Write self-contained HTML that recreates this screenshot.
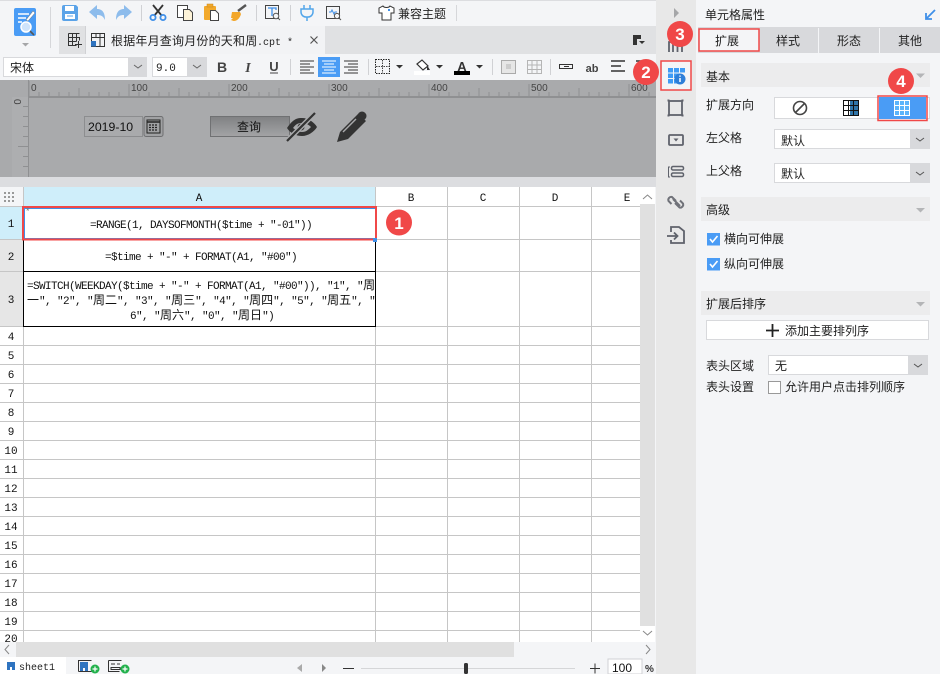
<!DOCTYPE html>
<html><head><meta charset="utf-8"><style>
html,body{margin:0;padding:0;background:#f4f5f7}
svg{display:block;position:absolute;left:0;top:0}
text{font-family:"Liberation Sans","WenQuanYi Zen Hei","Noto Sans CJK SC",sans-serif;font-size:12px;fill:#222}
.m{font-family:"Liberation Mono",monospace;font-size:11px;letter-spacing:-.6px;fill:#111}
.m tspan{font-family:"WenQuanYi Zen Hei","Noto Sans CJK SC",sans-serif;font-size:12px;letter-spacing:0}
.c{text-anchor:middle}
.h{font-family:"Liberation Mono",monospace;font-size:11px;fill:#111;text-anchor:middle}
.r{font-size:10px;fill:#444}
.n{font-family:"Liberation Mono",monospace;font-size:11px;fill:#111;text-anchor:middle}
.b{font-family:"Liberation Sans",sans-serif;font-size:17px;font-weight:bold;fill:#fff;text-anchor:middle}
.g line{stroke:#c6c6c6;stroke-width:1}
</style></head><body>
<svg width="940" height="674" viewBox="0 0 940 674" xmlns="http://www.w3.org/2000/svg">
<!-- base -->
<rect width="940" height="674" fill="#f4f5f7"/>
<rect width="940" height="1" fill="#dcdde0"/>
<!-- logo -->
<rect x="14" y="8" width="22" height="28" rx="2" fill="#4a9cf5"/>
<path d="M18 14h11M18 18h8M18 22h4" stroke="#fff" stroke-width="1.6"/>
<path d="M26 20l7-9 2 2-7 8z" fill="#fff" stroke="#777" stroke-width=".5"/>
<circle cx="26" cy="27" r="5" fill="#cfe4fb" stroke="#fff" stroke-width="1.5"/>
<path d="M30 31l4 4" stroke="#555" stroke-width="1.6"/>
<path d="M22 43h7l-3.5 3.5z" fill="#a5a6a8"/>
<rect x="50" y="7" width="1" height="41" fill="#d6d7da"/>
<!-- save -->
<path d="M62 7a2 2 0 0 1 2-2h12l2 2v12a2 2 0 0 1-2 2H64a2 2 0 0 1-2-2z" fill="#5ba3e8"/>
<path d="M65 6h9v5h-9zM65 14h10v5H65z" fill="#fff"/>
<path d="M67 16h6" stroke="#5ba3e8"/>
<!-- undo redo -->
<path d="M97 5v4c5 0 8 3 8 11-2-4-4-5-8-5v4l-8-7z" fill="#8dbcec"/>
<path d="M124 5v4c-5 0-8 3-8 11 2-4 4-5 8-5v4l8-7z" fill="#8dbcec"/>
<rect x="141" y="5" width="1" height="16" fill="#d0d1d4"/>
<!-- cut -->
<path d="M153 5l9 11M163 5l-9 11" stroke="#333" stroke-width="1.8"/>
<circle cx="153" cy="17.5" r="2.6" fill="none" stroke="#3f8fe8" stroke-width="1.8"/>
<circle cx="163" cy="17.5" r="2.6" fill="none" stroke="#3f8fe8" stroke-width="1.8"/>
<!-- copy -->
<rect x="177.500" y="5.500" width="10" height="12" fill="#fff" stroke="#444"/>
<path d="M183.500 9.500h6l3 3v8h-9z" fill="#fdf3d8" stroke="#444"/>
<!-- paste -->
<rect x="204" y="6" width="12" height="14" rx="1" fill="#f2a92c"/>
<rect x="207" y="4" width="6" height="3" fill="#f2a92c" stroke="#c5851a" stroke-width=".5"/>
<path d="M210.500 10.500h5l3 3v7h-8z" fill="#fff" stroke="#444"/>
<!-- brush -->
<path d="M238 11l8-6" stroke="#555" stroke-width="2.4"/>
<path d="M232 12l8 0 1 2c-1 4-4 7-7 7-1 0-3-1-3-1l2-2-2 0z" fill="#f3a72b"/>
<rect x="256" y="5" width="1" height="16" fill="#d0d1d4"/>
<!-- preview T -->
<rect x="265.500" y="5.500" width="13" height="13" fill="none" stroke="#444"/>
<path d="M268 8h8v2M272 8v8" fill="none" stroke="#3f8fe8" stroke-width="1.3"/>
<circle cx="276" cy="16" r="2.8" fill="#f4f5f7" stroke="#555"/><path d="M278 18l2 2" stroke="#555"/>
<rect x="290" y="5" width="1" height="16" fill="#d0d1d4"/>
<!-- plug -->
<path d="M304 5v4M310 5v4M301 9h12v3a5 5 0 0 1-5 5h-2a5 5 0 0 1-5-5zM307 17v4" fill="none" stroke="#53a6ea" stroke-width="1.5"/>
<!-- monitor -->
<rect x="326.500" y="6.500" width="13" height="12" fill="none" stroke="#444"/>
<path d="M329 12h2l1-2 2 4 1-2h2" fill="none" stroke="#3f8fe8"/>
<circle cx="337" cy="16" r="2.6" fill="#f4f5f7" stroke="#555"/><path d="M339 18l2 2" stroke="#555"/>
<!-- shirt -->
<path d="M383 6l-4 2v5h3v7h9v-7h3V8l-4-2c-1 2-6 2-7 0z" fill="#fff" stroke="#333"/>
<rect x="388" y="9" width="2" height="2" fill="#3f8fe8"/>
<text x="398" y="18">兼容主题</text>
<rect x="456" y="5" width="1" height="16" fill="#d6d7da"/>
<!-- tab row -->
<rect x="59" y="26" width="597" height="28" fill="#e0e1e3"/>
<path d="M68.500 33.500h11M68.500 33.500v12h8M72.500 33.500v12M76.500 33.500v8M68.500 37.500h11v3M68.500 41.500h8M78.500 41v7M75 44.500h7" fill="none" stroke="#333"/>
<rect x="86" y="26" width="239" height="28" fill="#f2f3f5"/>
<rect x="85" y="26" width="1" height="28" fill="#d0d1d4"/>
<path d="M91.500 33.500h13v13h-13zM91.500 37.500h13M96 33.500v4M100 33.500v13" fill="none" stroke="#333"/>
<path d="M91 41h5v5.500h-5z" fill="#2f74c0"/>
<text x="111" y="45" style="font-size:12px;letter-spacing:.2px">根据年月查询月份的天和周</text>
<text x="257" y="45" style="font-family:'Liberation Mono',monospace;font-size:10px">.cpt *</text>
<path d="M310.500 36.500l7 7M317.500 36.500l-7 7" stroke="#555" stroke-width="1.2"/>
<path d="M633 35h8v4h-4v6h-4z" fill="#333"/><path d="M639 41h6l-3 3z" fill="#333"/>
<!-- format toolbar -->
<rect x="3" y="57" width="144" height="20" fill="#d8d9dc"/>
<rect x="4" y="58" width="124" height="18" fill="#fff"/>
<text x="10" y="72" style="font-size:12px">宋体</text>
<path d="M134 65l4 3 4-3" fill="none" stroke="#666"/>
<rect x="152" y="57" width="55" height="20" fill="#d8d9dc"/>
<rect x="153" y="58" width="34" height="18" fill="#fff"/>
<text x="156" y="71" style="font-family:'Liberation Mono',monospace;font-size:11px">9.0</text>
<path d="M193 65l4 3 4-3" fill="none" stroke="#666"/>
<text x="222" y="72" class="c" style="font-size:14px;font-weight:bold;fill:#444">B</text>
<text x="248" y="72" class="c" style="font-size:14px;font-style:italic;font-weight:bold;fill:#444;font-family:'Liberation Serif',serif">I</text>
<text x="274" y="71" class="c" style="font-size:13px;font-weight:bold;fill:#444">U</text><path d="M270 73h8" stroke="#444"/>
<rect x="290" y="59" width="1" height="16" fill="#d0d1d4"/>
<path d="M300 61h14M300 64h10M300 67h14M300 70h10M300 73h14" stroke="#333"/>
<rect x="318" y="57" width="22" height="20" fill="#4a9cf5"/>
<path d="M322 61h14M324 64h10M322 67h14M324 70h10M322 73h14" stroke="#fff"/>
<path d="M344 61h14M348 64h10M344 67h14M348 70h10M344 73h14" stroke="#333"/>
<rect x="368" y="59" width="1" height="16" fill="#d0d1d4"/>
<rect x="375.500" y="59.500" width="14" height="14" fill="none" stroke="#222" stroke-dasharray="1.500 1"/>
<path d="M382.500 60v13M376 66.500h13" stroke="#444" stroke-dasharray="1.500 1"/>
<path d="M396 65h7l-3.500 3.500z" fill="#333"/>
<path d="M417 64l5-4 6 6-5 4z" fill="#fff" stroke="#333" stroke-width="1.200"/><path d="M427 65l3 5h-3z" fill="#333"/>
<rect x="414" y="71" width="16" height="4" fill="#fff"/>
<path d="M436 65h7l-3.500 3.500z" fill="#333"/>
<text x="462" y="71" class="c" style="font-size:13px;font-weight:bold;fill:#333">A</text>
<rect x="454" y="71" width="16" height="4" fill="#000"/>
<path d="M476 65h7l-3.500 3.500z" fill="#333"/>
<rect x="492" y="59" width="1" height="16" fill="#d0d1d4"/>
<rect x="501.500" y="60.500" width="14" height="13" fill="#e6e6e6" stroke="#aaa"/><rect x="506" y="64" width="5" height="5" fill="#ccc"/>
<path d="M527.500 60.500h14v13h-14zM527.500 65h14M527.500 69.500h14M532 60.500v13M537 60.500v13" fill="none" stroke="#b5b5b5"/>
<rect x="550" y="59" width="1" height="16" fill="#d0d1d4"/>
<path d="M559.500 64.500h13v4h-13zM564 66.500h5" fill="none" stroke="#333"/>
<text x="592" y="72" class="c" style="font-size:11px;font-weight:bold;fill:#444">ab</text>
<path d="M611 61h14M611 66h10M611 71h14M611 76h0" stroke="#333" stroke-width="1.600"/>
<path d="M636 61h8M640 61v12" stroke="#333" stroke-width="1.400"/>
<!-- design area -->
<rect x="0" y="80" width="656" height="97" fill="#a9aaac"/>
<rect x="12" y="97" width="17" height="80" fill="#adaeb0"/>
<rect x="28" y="96" width="628" height="2" fill="#8f9092"/>
<rect x="28" y="80" width="1" height="97" fill="#8f9092"/>
<path d="M29 81v15M129 84v12M229 84v12M329 84v12M429 84v12M529 84v12M629 84v12M79 88v8M179 88v8M279 88v8M379 88v8M479 88v8M579 88v8M39 92v4M49 92v4M59 92v4M69 92v4M89 92v4M99 92v4M109 92v4M119 92v4M139 92v4M149 92v4M159 92v4M169 92v4M189 92v4M199 92v4M209 92v4M219 92v4M239 92v4M249 92v4M259 92v4M269 92v4M289 92v4M299 92v4M309 92v4M319 92v4M339 92v4M349 92v4M359 92v4M369 92v4M389 92v4M399 92v4M409 92v4M419 92v4M439 92v4M449 92v4M459 92v4M469 92v4M489 92v4M499 92v4M509 92v4M519 92v4M539 92v4M549 92v4M559 92v4M569 92v4M589 92v4M599 92v4M609 92v4M619 92v4M639 92v4M649 92v4" stroke="#8f9092"/>
<g class="r"><text x="31" y="91" class="r">0</text><text x="131" y="91" class="r">100</text><text x="231" y="91" class="r">200</text><text x="331" y="91" class="r">300</text><text x="431" y="91" class="r">400</text><text x="531" y="91" class="r">500</text><text x="631" y="91" class="r">600</text></g>
<text x="0" y="0" transform="translate(14,99) rotate(90)" class="r">0</text>
<path d="M23 106.500h5M23 116.500h5M23 126.500h5M23 136.500h5M18 146.500h10M23 156.500h5M23 166.500h5" stroke="#8f9092"/>
<rect x="84.500" y="116.500" width="58" height="20" fill="#a9aaac" stroke="#8c8d8f"/>
<text x="88" y="131" style="font-size:12.300px;fill:#111">2019-10</text>
<rect x="144" y="116.500" width="19" height="20" rx="2" fill="#a0a1a3" stroke="#6e6f71"/>
<path d="M147 120h13v13h-13z" fill="none" stroke="#222"/>
<path d="M147 122h13" stroke="#222" stroke-width="1.500"/>
<path d="M149 125h9M149 127.500h9M149 130h9" stroke="#222" stroke-width="1.300" stroke-dasharray="2 1"/>
<defs><linearGradient id="btn" x1="0" y1="0" x2="0" y2="1"><stop offset="0" stop-color="#808183"/><stop offset="1" stop-color="#a3a4a6"/></linearGradient></defs>
<rect x="210.500" y="116.500" width="79" height="20" fill="url(#btn)" stroke="#707173"/>
<text x="249" y="131" class="c" style="font-size:12px;fill:#111">查询</text>
<path d="M287 128c6-9 10-10 15-10 6 0 12 4 15 9-3 5-9 9-15 9-6 0-12-3-15-8z" fill="#333"/>
<path d="M293 128c3-4 5-5 9-5 4 0 7 2 9 4-3 3-5 5-9 5-4 0-6-2-9-4z" fill="#a9aaac"/>
<circle cx="301" cy="127" r="3.500" fill="#333"/>
<path d="M287 141l29-29" stroke="#a9aaac" stroke-width="5"/>
<path d="M287 141l28-28" stroke="#333" stroke-width="2.200"/>
<path d="M337 142l3-10 18-18 8 7-18 18z" fill="#333"/>
<circle cx="362" cy="116" r="4.500" fill="#333"/>
<path d="M343 132l13-13" stroke="#a9aaac" stroke-width="1.400"/>
<rect x="0" y="177" width="656" height="10" fill="#dcdde0"/>
<!-- grid -->
<rect x="0" y="187" width="640" height="455" fill="#fff"/>
<rect x="24" y="187" width="352" height="20" fill="#cfeefa"/>
<rect x="0" y="207" width="23" height="33" fill="#cfeefa"/>
<rect x="0" y="240" width="23" height="87" fill="#e6e6e6"/>
<rect x="0" y="187" width="23" height="20" fill="#f4f5f7"/>
<path d="M4 193h2M8 193h2M12 193h2M4 197h2M8 197h2M12 197h2M4 201h2M8 201h2M12 201h2" stroke="#999" stroke-width="2"/>
<g class="g" shape-rendering="crispEdges">
<line x1="0" y1="206.500" x2="640" y2="206.500"/>
<line x1="0" y1="239.500" x2="640" y2="239.500"/><line x1="0" y1="271.500" x2="640" y2="271.500"/><line x1="0" y1="326.500" x2="640" y2="326.500"/>
<line x1="0" y1="345.500" x2="640" y2="345.500"/><line x1="0" y1="364.500" x2="640" y2="364.500"/><line x1="0" y1="383.500" x2="640" y2="383.500"/><line x1="0" y1="402.500" x2="640" y2="402.500"/><line x1="0" y1="421.500" x2="640" y2="421.500"/><line x1="0" y1="440.500" x2="640" y2="440.500"/><line x1="0" y1="459.500" x2="640" y2="459.500"/><line x1="0" y1="478.500" x2="640" y2="478.500"/><line x1="0" y1="497.500" x2="640" y2="497.500"/><line x1="0" y1="516.500" x2="640" y2="516.500"/><line x1="0" y1="535.500" x2="640" y2="535.500"/><line x1="0" y1="554.500" x2="640" y2="554.500"/><line x1="0" y1="573.500" x2="640" y2="573.500"/><line x1="0" y1="592.500" x2="640" y2="592.500"/><line x1="0" y1="611.500" x2="640" y2="611.500"/><line x1="0" y1="630.500" x2="640" y2="630.500"/>
<line x1="23.500" y1="187" x2="23.500" y2="642"/><line x1="375.500" y1="187" x2="375.500" y2="642"/><line x1="447.500" y1="187" x2="447.500" y2="642"/><line x1="519.500" y1="187" x2="519.500" y2="642"/><line x1="591.500" y1="187" x2="591.500" y2="642"/>
</g>
<g>
<text x="199" y="201" class="h">A</text><text x="411" y="201" class="h">B</text><text x="483" y="201" class="h">C</text><text x="555" y="201" class="h">D</text><text x="627" y="201" class="h">E</text>
<text x="11" y="227" class="n">1</text><text x="11" y="260" class="n">2</text><text x="11" y="303" class="n">3</text><text x="11" y="340" class="n">4</text><text x="11" y="359" class="n">5</text><text x="11" y="378" class="n">6</text><text x="11" y="397" class="n">7</text><text x="11" y="416" class="n">8</text><text x="11" y="435" class="n">9</text><text x="11" y="454" class="n">10</text><text x="11" y="473" class="n">11</text><text x="11" y="492" class="n">12</text><text x="11" y="511" class="n">13</text><text x="11" y="530" class="n">14</text><text x="11" y="549" class="n">15</text><text x="11" y="568" class="n">16</text><text x="11" y="587" class="n">17</text><text x="11" y="606" class="n">18</text><text x="11" y="625" class="n">19</text><text x="11" y="642" class="n">20</text>
</g>
<!-- cells -->
<rect x="23.500" y="239.500" width="352" height="87" fill="none" stroke="#000" shape-rendering="crispEdges"/>
<path d="M23 271.500h353" stroke="#000" shape-rendering="crispEdges"/>
<rect x="24.500" y="208.500" width="351" height="30" fill="none" stroke="#3f8fe8"/>
<rect x="23" y="207" width="353" height="32.500" fill="none" stroke="#f04848" stroke-width="2"/>
<rect x="373" y="238" width="4" height="4" fill="#3f8fe8"/>
<text x="26" y="214" style="font-size:9px;fill:#777">*</text>
<text x="90" y="228" class="m">=RANGE(1, DAYSOFMONTH($time + "-01"))</text>
<text x="105" y="260" class="m">=$time + "-" + FORMAT(A1, "#00")</text>
<text x="27" y="289" class="m">=SWITCH(WEEKDAY($time + "-" + FORMAT(A1, "#00")), "1", "<tspan>周</tspan></text>
<text x="27" y="304" class="m"><tspan>一</tspan>", "2", "<tspan>周二</tspan>", "3", "<tspan>周三</tspan>", "4", "<tspan>周四</tspan>", "5", "<tspan>周五</tspan>", "</text>
<text x="130" y="319" class="m">6", "<tspan>周六</tspan>", "0", "<tspan>周日</tspan>")</text>
<!-- v scrollbar -->
<rect x="640" y="187" width="16" height="455" fill="#f4f5f7"/>
<rect x="640" y="204" width="15" height="422" fill="#e0e0e0"/>
<rect x="640" y="187" width="15" height="17" fill="#fff"/>
<path d="M643 199l4.500-4 4.500 4" fill="none" stroke="#888"/>
<rect x="640" y="626" width="15" height="16" fill="#fff"/>
<path d="M643 631l4.500 4 4.500-4" fill="none" stroke="#888"/>
<!-- h scrollbar -->
<rect x="0" y="642" width="656" height="15" fill="#f4f5f7"/>
<rect x="16" y="642" width="498" height="15" fill="#e0e0e0"/>
<path d="M9 645l-4 4.500 4 4.500" fill="none" stroke="#888"/>
<path d="M646 645l4 4.500-4 4.500" fill="none" stroke="#888"/>
<!-- sheet bar -->
<rect x="0" y="657" width="66" height="17" fill="#fff"/>
<path d="M7 662h8v8h-3v-3h-2v3H7z" fill="#2f74c0"/>
<text x="19" y="670" style="font-family:'Liberation Mono',monospace;font-size:10px;fill:#222">sheet1</text>
<path d="M78.500 671.500v-11h13M105 660" fill="none" stroke="#333"/><path d="M78.500 671.500h13" stroke="#333"/>
<path d="M80 662h8v9h-3v-3h-2v3h-3z" fill="#2f74c0"/>
<circle cx="95" cy="669" r="4.500" fill="#22b14c"/><path d="M92.500 669h5M95 666.500v5" stroke="#fff" stroke-width="1.200"/>
<path d="M108.500 660.500h13M108.500 660.500v11h11" fill="none" stroke="#333"/><path d="M111 664h4M117 664h3M111 667.500h9v2h-9z" fill="none" stroke="#333"/>
<circle cx="125" cy="669" r="4.500" fill="#22b14c"/><path d="M122.500 669h5M125 666.500v5" stroke="#fff" stroke-width="1.200"/>
<path d="M302 664v8l-5-4z" fill="#aaa"/><path d="M322 664v8l4-4z" fill="#888"/>
<path d="M343 668.500h11" stroke="#333"/>
<path d="M361 668.500h214" stroke="#d5d6d8"/>
<rect x="464" y="663" width="4" height="11" rx="1.500" fill="#333"/>
<path d="M590 668.500h10M595 663.500v10" stroke="#333"/>
<rect x="608" y="659" width="34" height="15" fill="#fff" stroke="#d0d1d4"/>
<text x="612" y="672" style="font-size:12px;fill:#111">100</text>
<text x="645" y="672" style="font-size:10px;font-weight:bold;fill:#333">%</text>
<!-- sidebar -->
<rect x="656" y="0" width="40" height="674" fill="#e8e8e8"/>
<path d="M674 8v10l5-5z" fill="#a5a6a8"/>
<path d="M669 52V42h13v10M673 42v10M677.500 42v10" fill="none" stroke="#5f626b" stroke-width="1.800"/>
<rect x="661" y="61" width="30" height="29" fill="#f4f5f7" stroke="#f04848" stroke-width="1.500"/>
<path d="M668 68h5v4.500h-5zM674 68h5v4.500h-5zM680 68h5v4.500h-5zM668 73.500h5v4.500h-5zM668 79h5v4.500h-5zM674 73.500h5v4.500h-5zM674 79h3v4.500h-3z" fill="#3f9bf5"/>
<circle cx="680" cy="79" r="5.500" fill="#2f7fd8"/><path d="M680 78v4M680 75.500v1.300" stroke="#fff" stroke-width="1.500"/>
<rect x="669" y="101" width="13" height="14" fill="none" stroke="#5f626b" stroke-width="1.800"/>
<path d="M667.500 99.500h2v2h-2zM681.500 99.500h2v2h-2zM667.500 114.500h2v2h-2zM681.500 114.500h2v2h-2z" fill="#5f626b"/>
<rect x="669" y="135" width="14" height="10" rx="1" fill="none" stroke="#5f626b" stroke-width="1.800"/>
<path d="M673.500 138.500h5l-2.500 3z" fill="#5f626b"/>
<rect x="671.500" y="166.500" width="12" height="3.500" rx="1.500" fill="none" stroke="#5f626b" stroke-width="1.500"/>
<rect x="671.500" y="173" width="12" height="3.500" rx="1.500" fill="none" stroke="#5f626b" stroke-width="1.500"/>
<path d="M670 167h-1.500v10h1.500" fill="none" stroke="#5f626b"/>
<path d="M676 201l-4-4a3 3 0 0 0-3.500 4l3 3M675 203l4.500 4.500a3 3 0 0 0 3.500-4l-3-3M673 199l7 7" fill="none" stroke="#707279" stroke-width="2"/>
<path d="M671 232v-5h8l5 4v12h-13v-3" fill="none" stroke="#5f626b" stroke-width="1.800"/>
<path d="M667 236h10M674 232.500l3.500 3.500-3.500 3.500" fill="none" stroke="#5f626b" stroke-width="1.800"/>
<!-- panel -->
<rect x="696" y="0" width="244" height="674" fill="#f4f5f7"/>
<text x="705" y="19">单元格属性</text>
<path d="M935 10l-8 8M926 13v6h6" fill="none" stroke="#3f8fe8" stroke-width="1.800"/>
<rect x="698" y="27" width="242" height="26" fill="#d8d9dc"/>
<path d="M818.500 28v25M879.500 28v25" stroke="#f4f5f7"/>
<rect x="699" y="29" width="60" height="22" fill="#f4f5f7" stroke="#f04848" stroke-width="1.500"/>
<text x="727" y="45" class="c" style="font-size:12px">扩展</text>
<text x="788" y="45" class="c">样式</text><text x="849" y="45" class="c">形态</text><text x="910" y="45" class="c">其他</text>
<rect x="701" y="63" width="229" height="24" fill="#ececed"/>
<text x="706" y="81">基本</text>
<path d="M916 73.500h9l-4.500 4.500z" fill="#b4b5b7"/>
<text x="706" y="109">扩展方向</text>
<rect x="774.500" y="97.500" width="155" height="21" fill="#fff" stroke="#d8d9dc"/>
<circle cx="800" cy="108" r="6.500" fill="none" stroke="#444" stroke-width="1.600"/>
<path d="M795.500 112.500l9-9" stroke="#444" stroke-width="1.600"/>
<rect x="850" y="101" width="8" height="15" fill="#2f74a8"/>
<path d="M843.500 100.500h15v15h-15zM843.500 105.500h15M843.500 110.500h15M848.500 100.500v15M853.500 100.500v15" fill="none" stroke="#111"/>
<rect x="879" y="97" width="47" height="22" fill="#4a9cf5"/>
<path d="M894.500 100.500h15v15h-15zM894.500 105.500h15M894.500 110.500h15M899.500 100.500v15M904.500 100.500v15" fill="#5bb4fb" stroke="#fff"/>
<rect x="878" y="96" width="49" height="24.500" fill="none" stroke="#f04848" stroke-width="1.500"/>
<text x="706" y="142">左父格</text>
<rect x="774" y="129" width="156" height="20" fill="#d8d9dc"/><rect x="775" y="130" width="135" height="18" fill="#fff"/>
<text x="781" y="145">默认</text>
<path d="M916 138l4 3 4-3" fill="none" stroke="#555"/>
<text x="706" y="175">上父格</text>
<rect x="774" y="163" width="156" height="20" fill="#d8d9dc"/><rect x="775" y="164" width="135" height="18" fill="#fff"/>
<text x="781" y="178">默认</text>
<path d="M916 172l4 3 4-3" fill="none" stroke="#555"/>
<rect x="701" y="197" width="229" height="24" fill="#ececed"/>
<text x="706" y="214">高级</text>
<path d="M916 208h9l-4.500 4.500z" fill="#b4b5b7"/>
<rect x="707" y="233" width="13" height="12.500" fill="#4a9cf5"/>
<path d="M710 239l2.500 3 5-6" fill="none" stroke="#fff" stroke-width="1.600"/>
<text x="724" y="243">横向可伸展</text>
<rect x="707" y="258" width="13" height="12.500" fill="#4a9cf5"/>
<path d="M710 264l2.500 3 5-6" fill="none" stroke="#fff" stroke-width="1.600"/>
<text x="724" y="268">纵向可伸展</text>
<rect x="701" y="291" width="229" height="24" fill="#ececed"/>
<text x="706" y="308">扩展后排序</text>
<path d="M916 302h9l-4.500 4.500z" fill="#b4b5b7"/>
<rect x="706.500" y="320.500" width="222" height="19" fill="#fff" stroke="#d8d9dc"/>
<path d="M766 330.500h13M772.500 324v13" stroke="#222" stroke-width="1.800"/>
<text x="785" y="335">添加主要排列序</text>
<text x="706" y="370">表头区域</text>
<rect x="768" y="355" width="160" height="20" fill="#d8d9dc"/><rect x="769" y="356" width="139" height="18" fill="#fff"/>
<text x="775" y="370">无</text>
<path d="M914 364l4 3 4-3" fill="none" stroke="#555"/>
<text x="706" y="391">表头设置</text>
<rect x="768.500" y="381.500" width="12" height="12" fill="#fff" stroke="#999"/>
<text x="785" y="391">允许用户点击排列顺序</text>
<!-- badges -->
<circle cx="399" cy="222.500" r="13" fill="#f04848"/><text x="399" y="229" class="b">1</text>
<circle cx="646" cy="72" r="13" fill="#f04848"/><text x="646" y="78" class="b">2</text>
<circle cx="680" cy="34" r="13" fill="#f04848"/><text x="680" y="40" class="b">3</text>
<circle cx="901" cy="81" r="13" fill="#f04848"/><text x="901" y="87" class="b">4</text>
</svg>
</body></html>
